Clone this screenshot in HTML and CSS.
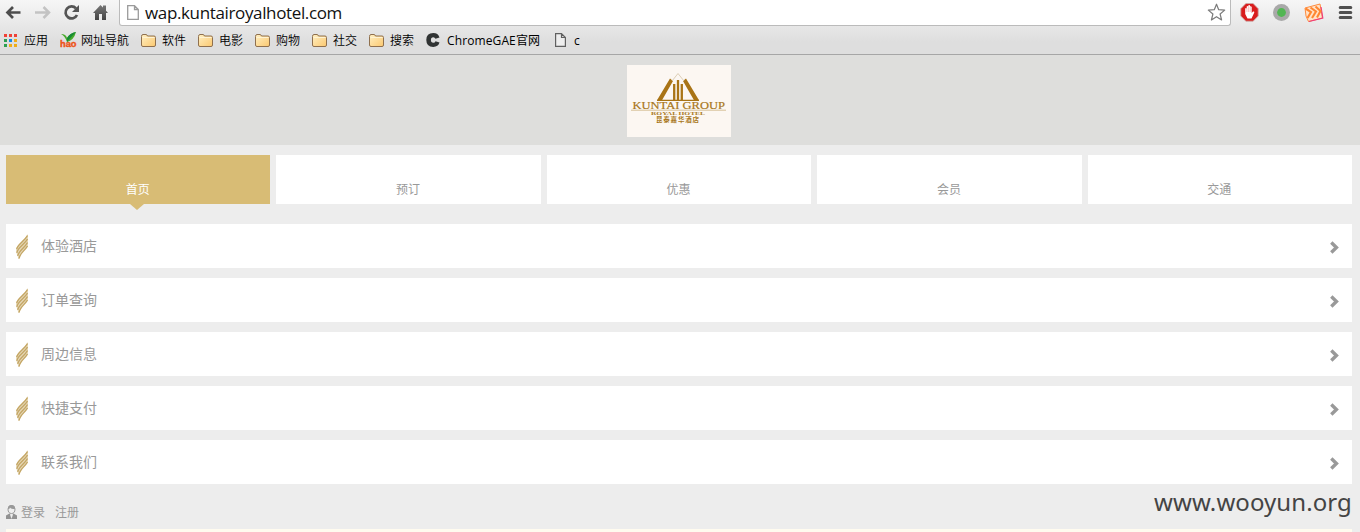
FILE: index.html
```html
<!DOCTYPE html>
<html lang="zh-CN">
<head>
<meta charset="utf-8">
<title>wap.kuntairoyalhotel.com</title>
<link rel="stylesheet" href="styles.css">
</head>
<body>
<svg class="defs" width="0" height="0">
  <defs>
    <linearGradient id="gold" x1="0" y1="0" x2="1" y2="1"><stop offset="0" stop-color="#fff0c4"/><stop offset="1" stop-color="#fbc86f"/></linearGradient>
    <linearGradient id="dark" x1="0" y1="0" x2="0" y2="1"><stop offset="0" stop-color="#777"/><stop offset="1" stop-color="#444"/></linearGradient>
    <symbol id="folder" viewBox="0 0 15 13"><path d="M.5 11V2.500Q.5 .5 2 .5H5Q6 .5 6.500 2H13Q14.500 2 14.500 3.500V11Q14.500 12.500 13 12.500H2Q.5 12.500 .5 11Z" fill="url(#gold)" stroke="#8f704e"/><path d="M1.500 3.500H13.500" stroke="#fff3d2"/></symbol>
    <symbol id="feather" viewBox="0 0 12 25"><path d="M12 0V12C9 17 4 18 3.500 25H2.500C2 22 0 20 0 15C2 9 9 6 12 0Z" fill="#e6d8b8"/><path d="M.6 15C2 10 8.500 7 11.500 1.500M.8 18.800C2 13 8.500 10.500 11.500 5M1.700 21.800C3 16.500 8.500 14 11.500 8.500M3 24.500C4 19 8.500 17 11.500 12" fill="none" stroke="#c4a664" stroke-width="1.350"/></symbol>
    <symbol id="chevron" viewBox="0 0 9 13"><path d="M1.300 1.600L6.400 6.500L1.300 11.400" fill="none" stroke="#999" stroke-width="3.400"/></symbol>
  </defs>
</svg>
<div class="browser">
  <div class="toolbar">
    <svg class="nav-icons" width="119" height="26" viewBox="0 0 119 26">
      <path d="M20.500 12.500H8M13 7L7.500 12.500L13 18" fill="none" stroke="#4d4d4d" stroke-width="2.700"/>
      <path d="M35 12.500H48M43.500 7L49 12.500L43.500 18" fill="none" stroke="#c3c3c3" stroke-width="2.500"/>
      <path d="M76 8.400A6 6 0 1 0 77 15" fill="none" stroke="#555" stroke-width="2.700"/><path d="M79 5V12H72Z" fill="#555"/>
      <path d="M93 13L100.500 5L103 7.600V5.500H106V10.800L108 13H106V20H102V14H99V20H95V13Z" fill="url(#dark)"/>
    </svg>
    <div class="address">
      <svg width="12" height="15" viewBox="0 0 12 15"><path d="M.7 .7H7.500L11.300 4.500V14.300H.7ZM7.500 .7V4.500H11.300" fill="#fff" stroke="#9b9b9b" stroke-width="1.300"/></svg>
      <span class="url">wap.kuntairoyalhotel.com</span>
      <svg class="star" width="19" height="19" viewBox="0 0 19 19"><path d="M9.500 1.200L11.700 6.700L17.700 7.100L13.100 11L14.600 17L9.500 13.700L4.400 17L5.900 11L1.300 7.100L7.300 6.700Z" fill="#fff" stroke="#7b7b7b" stroke-width="1.200" stroke-linejoin="round"/></svg>
    </div>
    <svg class="extensions" width="129" height="26" viewBox="0 0 129 26">
      <path d="M14.900 3.500H22.100L27.200 8.700V16L22.100 21.200H14.900L9.800 16V8.700Z" fill="#d91d1d" stroke="#c9aaa6" stroke-width=".8"/>
      <path d="M14.200 14V8.500Q15 7.500 15.700 8.500V6.500Q16.500 5.500 17.300 6.500V5.500Q18.200 4.700 19 5.500V6.500Q20 5.800 20.700 7V13L22 11.500Q23.500 11 23.300 12.500L20.500 18.500H16.500Z" fill="#fff"/><path d="M15.900 8V12M17.600 6.500V12M19.200 7V12" stroke="#e66" stroke-width=".4"/>
      <circle cx="50.500" cy="12.500" r="8.500" fill="#a9a9a9"/><circle cx="50.500" cy="12.500" r="4.400" fill="#52b653"/>
      <path d="M74 8L89 4L91.500 18L77.500 21.500L75 16Z" fill="#ffe3c9" stroke="#ff8b3d"/><path d="M90 7L91.800 18L78 21.500" fill="none" stroke="#ef3d7d" stroke-width="1.200"/>
      <path d="M74.500 8.500L80 12L76.500 18M79.500 7.500L85 11.500L81 18M84.500 6.500L89.500 11L86 17.500" fill="none" stroke="#ff8731" stroke-width="2.100"/>
      <path d="M109.200 7.500H119.800M109.200 12.500H119.800M109.200 17.500H119.800" stroke="#505050" stroke-width="3" stroke-linecap="round"/>
    </svg>
  </div>
  <div class="bookmarks">
    <div class="bookmark apps"><svg width="13" height="13" viewBox="0 0 13 13"><path d="M0 0H3V3H0ZM5 0H8V3H5ZM10 0H13V3H10Z" fill="#ef4136"/><path d="M0 5H3V8H0ZM0 10H3V13H0Z" fill="#2c9f50"/><path d="M5 5H8V8H5Z" fill="#168be8"/><path d="M10 5H13V8H10ZM5 10H8V13H5ZM10 10H13V13H10Z" fill="#efad19"/></svg><span>应用</span></div>
    <div class="bookmark hao"><svg width="17" height="16" viewBox="0 0 17 16"><path d="M1 2Q6 2 7 6Q10 1 16 0Q14 8 7 10Q5 4 1 2Z" fill="#48aa2b"/><path d="M7 6Q10 1 16 0Q12 4 7 10Z" fill="#168b36"/><text x="0" y="15" class="hao-text" textLength="16.500" lengthAdjust="spacingAndGlyphs">hao</text></svg><span>网址导航</span></div>
    <div class="bookmark"><svg width="15" height="13"><use href="#folder"/></svg><span>软件</span></div>
    <div class="bookmark"><svg width="15" height="13"><use href="#folder"/></svg><span>电影</span></div>
    <div class="bookmark"><svg width="15" height="13"><use href="#folder"/></svg><span>购物</span></div>
    <div class="bookmark"><svg width="15" height="13"><use href="#folder"/></svg><span>社交</span></div>
    <div class="bookmark"><svg width="15" height="13"><use href="#folder"/></svg><span>搜索</span></div>
    <div class="bookmark gae"><svg width="15" height="14" viewBox="0 0 15 14"><path d="M13.500 4.500L9.500 5.800Q8.800 4.200 7.300 4.200Q4.900 4.200 4.900 7T7.300 9.800Q9 9.800 9.500 8.200L13.500 9.500Q12.200 13.900 7.300 13.900Q.3 13.900 .3 7T7.300 .1Q12.100 .1 13.500 4.500Z" fill="#303333"/></svg><span>ChromeGAE官网</span></div>
    <div class="bookmark page-link"><svg width="11" height="14" viewBox="0 0 11 14"><path d="M.6 .6H6.500L10.400 4.500V13.400H.6ZM6.500 .6V4.500H10.400" fill="#eee" stroke="#606060" stroke-width="1.200"/></svg><span>c</span></div>
  </div>
</div>
<header class="hotel-header">
  <svg class="logo" width="104" height="72" viewBox="0 0 104 72">
    <path d="M30 35.300L43 13.500L46 16L35 35.300ZM72 35.300L59 13.500L56 16L67 35.300Z" fill="#a97416"/>
    <path d="M45 16L51 8.500L57 16" fill="none" stroke="#ddcfb7"/><path d="M30 35.300H72" stroke="#a97416" stroke-width="1.300"/>
    <path d="M47.200 35V19M51 35V15M54.800 35V19" stroke="#a97416" stroke-width="2.300"/>
    <text x="5.500" y="43.500" class="brand" textLength="92.500" lengthAdjust="spacingAndGlyphs">KUNTAI GROUP</text>
    <path d="M4 45.200H99" stroke="#cbb380" stroke-width=".8"/>
    <text x="24" y="50" class="brand-sub" textLength="54" lengthAdjust="spacingAndGlyphs">ROYAL HOTEL</text>
    <text x="29" y="56.500" class="brand-cn" textLength="43">昆泰嘉华酒店</text>
  </svg>
</header>
<main class="content">
  <nav class="tabs"><a class="tab active">首页</a><a class="tab">预订</a><a class="tab">优惠</a><a class="tab">会员</a><a class="tab">交通</a></nav>
  <div class="menu">
    <a class="row"><svg width="12" height="25"><use href="#feather"/></svg><span>体验酒店</span><svg class="chevron" width="9" height="13"><use href="#chevron"/></svg></a>
    <a class="row"><svg width="12" height="25"><use href="#feather"/></svg><span>订单查询</span><svg class="chevron" width="9" height="13"><use href="#chevron"/></svg></a>
    <a class="row"><svg width="12" height="25"><use href="#feather"/></svg><span>周边信息</span><svg class="chevron" width="9" height="13"><use href="#chevron"/></svg></a>
    <a class="row"><svg width="12" height="25"><use href="#feather"/></svg><span>快捷支付</span><svg class="chevron" width="9" height="13"><use href="#chevron"/></svg></a>
    <a class="row"><svg width="12" height="25"><use href="#feather"/></svg><span>联系我们</span><svg class="chevron" width="9" height="13"><use href="#chevron"/></svg></a>
  </div>
  <div class="account">
    <svg width="11" height="14" viewBox="0 0 11 14"><path d="M2 4Q2 .5 5.500 .5T9 4Q9 8.500 5.500 8.500T2 4Z" fill="#eee" stroke="#9a9a9a"/><path d="M2 4Q2 0 5.500 0T9 4Q5 4 4 2.500Q4 4 2 4Z" fill="#999"/><path d="M0 14V10.500L3.500 8.500L5.500 11L7.500 8.500L11 10.500V14Z" fill="#929292"/><path d="M4 9.500L5.500 14L7 9.500" fill="#eee"/></svg>
    <a>登录</a><a class="register">注册</a>
  </div>
  <div class="bottom-panel"></div>
</main>
<div class="watermark">www.wooyun.org</div>
</body>
</html>
```
FILE: styles.css
```css
* { box-sizing: border-box; }
body { margin: 0; width: 1360px; height: 532px; overflow: hidden; background: #ededed; font-family: "Liberation Sans", "Noto Sans CJK SC", sans-serif; color: #999; }
svg { display: block; flex: none; }
.defs { position: absolute; }
.browser { height: 55px; background: linear-gradient(#f6f6f6, #dedede 42px); border-bottom: 1px solid #a6a6a6; }
.toolbar { display: flex; height: 26px; }
.address { display: flex; align-items: center; width: 1112px; height: 26px; padding: 0 4px 0 7px; background: #fff; border: 1px solid #bbb; border-top: 0; border-radius: 0 0 3px 3px; }
.url { margin-left: 6px; color: #111; font: 17px/24px "Open Sans", sans-serif; letter-spacing: -.36px; white-space: nowrap; }
.star { margin-left: auto; }
.bookmarks { display: flex; height: 28px; padding-left: 4px; gap: 12px; color: #000; font: 12px/16px "Open Sans", "Noto Sans CJK SC", sans-serif; font-weight: 350; white-space: nowrap; }
.bookmark { display: flex; align-items: center; gap: 6px; }
.bookmark span { padding-top: 2px; }
.bookmark.apps { gap: 7px; }
.bookmark.hao { gap: 4px; }
.bookmark.gae { gap: 6px; }
.gae span { width: 94px; font-weight: 400; letter-spacing: .1px; }
.bookmark.page-link { gap: 8px; margin-left: 2px; font-weight: 400; }
.hao-text { fill: #ed5316; font: bold 9px "Liberation Sans", sans-serif; stroke: #ed5316; stroke-width: .4px; }
.hotel-header { display: flex; justify-content: center; height: 90px; padding: 10px 2px 0 0; background: #dededc; }
.logo { background: #fcf7f2; }
.brand { fill: #a97721; font: 10.5px "Liberation Serif", serif; stroke: #a97721; stroke-width: .2px; }
.brand-sub { fill: #a97721; font: bold 5px "Liberation Serif", serif; }
.brand-cn { fill: #a97721; font: bold 6.5px "Noto Sans CJK SC", sans-serif; }
.content { padding: 10px 8px 0 6px; }
.tabs { display: grid; grid-template-columns: repeat(5, 1fr); gap: 6px; height: 49px; }
.tab { position: relative; padding: 26px 1px 0 0; background: #fff; text-align: center; font-size: 12px; line-height: 18px; }
.tab.active { background: #d8bc75; color: #fff; }
.tab.active::after { content: ""; position: absolute; left: 124px; top: 49px; border: 7px solid transparent; border-top: 6px solid #d8bc75; border-bottom: 0; }
.menu { display: grid; gap: 10px; margin-top: 20px; }
.row { display: flex; align-items: center; height: 44px; padding: 0 13px 0 10px; background: #fff; font-size: 14px; line-height: 20px; }
.row span { margin-left: 13px; }
.row .chevron { margin: 3px 0 0 auto; }
.account { display: flex; align-items: center; height: 18px; margin-top: 19px; font-size: 12px; line-height: 18px; }
.account a { margin-left: 4px; padding-top: 2px; }
.account .register { margin-left: 10px; }
.bottom-panel { height: 20px; margin-top: 8px; background: #fffbef; }
.watermark { position: absolute; left: 1154px; top: 485px; color: #444; font: 24px/33px "Noto Sans", sans-serif; letter-spacing: .08px; white-space: nowrap; }
```
